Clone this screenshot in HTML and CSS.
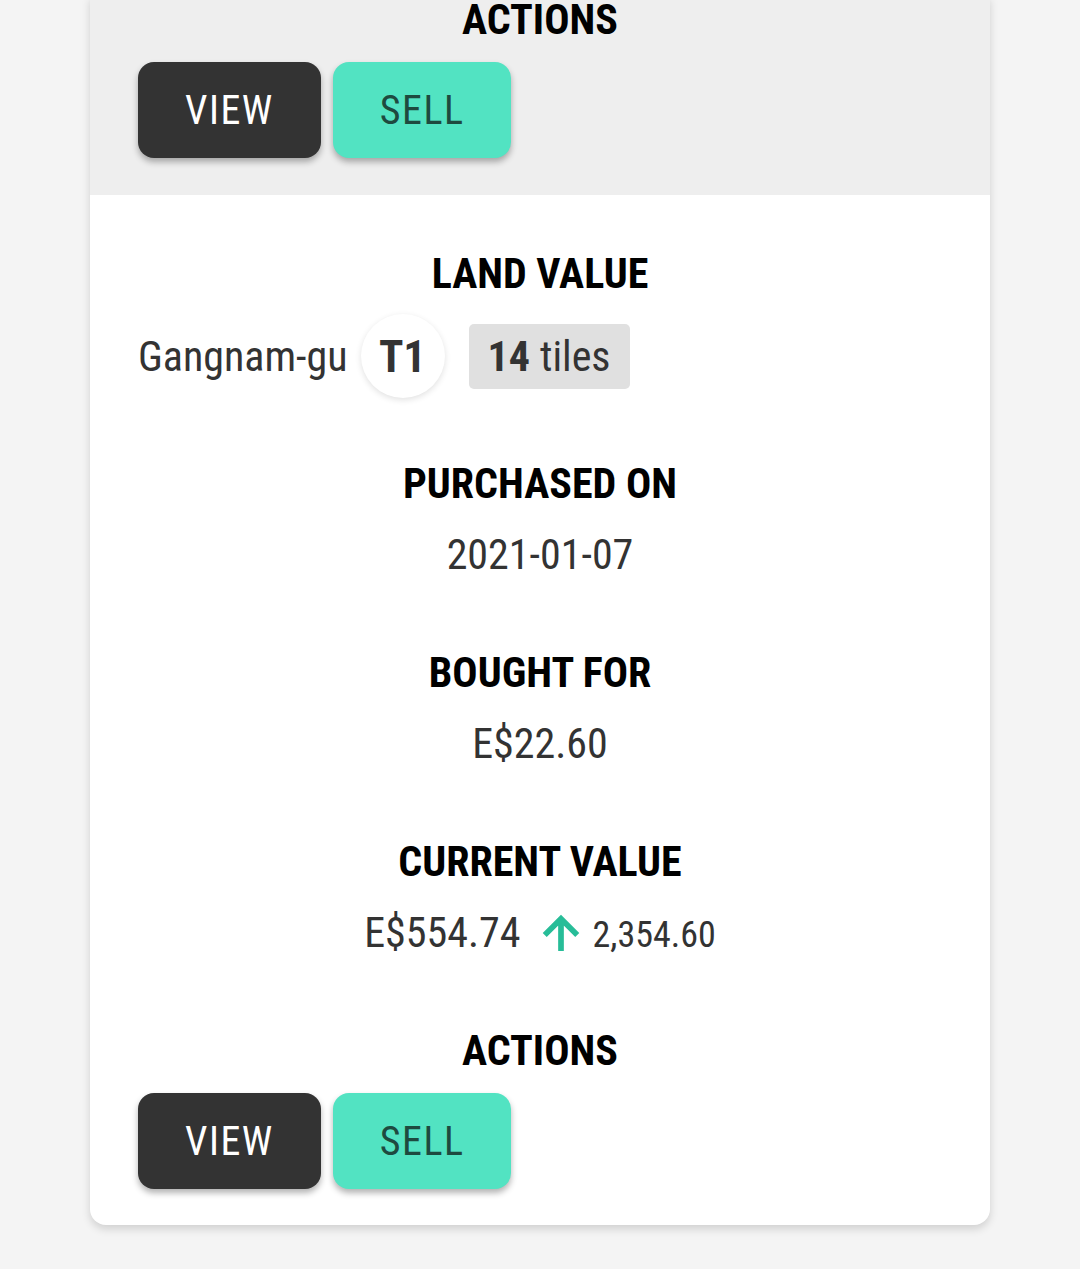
FILE: index.html
```html
<!DOCTYPE html>
<html>
    <head>
        <meta charset="utf-8" />
        <meta name="viewport" content="width=device-width, initial-scale=1" />
        <title>My Land</title>
        <link rel="stylesheet" href="styles.css">
    </head>
    <body>
        <div class="card">
            <div class="card-top">
                <h2 class="label">Actions</h2>
                <div class="actions">
                    <button class="btn btn-dark">View</button>
                    <button class="btn btn-teal">Sell</button>
                </div>
            </div>

            <div class="card-body">
                <div class="field">
                    <h2 class="label">Land Value</h2>
                    <div class="land-row">
                        <span class="district">Gangnam-gu</span>
                        <span class="tier">T1</span>
                        <span class="tiles"><b>14</b> tiles</span>
                    </div>
                </div>

                <div class="field">
                    <h2 class="label">Purchased On</h2>
                    <p class="value">2021-01-07</p>
                </div>

                <div class="field">
                    <h2 class="label">Bought For</h2>
                    <p class="value">E$22.60</p>
                </div>

                <div class="field">
                    <h2 class="label">Current Value</h2>
                    <p class="value value-row">
                        E$554.74
                        <svg class="trend" viewBox="0 0 24 24" width="52" height="52">
                            <path d="M4 12l1.41 1.41L11 7.83V20h2V7.83l5.58 5.59L20 12l-8-8-8 8z" />
                        </svg>
                        <span class="change">2,354.60</span>
                    </p>
                </div>

                <h2 class="label">Actions</h2>
                <div class="actions">
                    <button class="btn btn-dark">View</button>
                    <button class="btn btn-teal">Sell</button>
                </div>
            </div>
        </div>
    </body>
</html>
```

FILE: styles.css
```css
body {
    background: #f4f4f4;
    font-family: Roboto, "Liberation Sans", sans-serif;
    font-stretch: condensed;
    margin: 0;
    padding: 0 0 45px;
}

.card {
    width: 900px;
    margin: -4px auto 0;
    background: white;
    border-radius: 0 0 16px 16px;
    box-shadow: 0 4px 8px rgba(0, 0, 0, 0.15);
    overflow: hidden;
}

.card-top {
    background: #eeeeee;
    padding: 0 48px 37px;
}

.card-body {
    padding: 55px 48px 36px;
}

.label {
    margin: 0;
    font-size: 42px;
    line-height: 48px;
    font-weight: 700;
    text-transform: uppercase;
    text-align: center;
    color: #000;
}

.field {
    margin-bottom: 70px;
}

.value {
    margin: 23px 0 0;
    font-size: 42px;
    line-height: 48px;
    text-align: center;
    color: #333;
}

.value-row {
    height: 48px;
    display: flex;
    justify-content: center;
    align-items: center;
}

.trend {
    fill: #27bd98;
    stroke: #27bd98;
    stroke-width: 0.6;
    margin: 0 6px 0 14px;
}

.change {
    font-size: 36px;
    margin-top: 4px;
}

.land-row {
    display: flex;
    align-items: center;
    margin: 16px 0 -8px;
    color: #333;
    font-size: 42px;
}

.tier {
    width: 84px;
    height: 84px;
    margin-left: 13px;
    border-radius: 50%;
    background: white;
    box-shadow: 0 2px 6px rgba(0, 0, 0, 0.12);
    display: flex;
    align-items: center;
    justify-content: center;
    font-size: 45px;
    font-weight: 700;
}

.tiles {
    margin-left: 24px;
    height: 65px;
    padding: 0 19px;
    background: #e0e0e0;
    border-radius: 5px;
    display: flex;
    align-items: center;
    gap: 10px;
}

.actions {
    display: flex;
    gap: 12px;
    margin-top: 18px;
}

.btn {
    height: 96px;
    padding: 0 47px;
    border: none;
    border-radius: 16px;
    font-family: inherit;
    font-stretch: condensed;
    font-size: 40px;
    letter-spacing: 1.5px;
    text-transform: uppercase;
    box-shadow: 0 4px 6px rgba(0, 0, 0, 0.3);
}

.btn-dark {
    background: #333;
    color: white;
}

.btn-teal {
    background: #52e3c2;
    color: #1e4a3f;
}
```
